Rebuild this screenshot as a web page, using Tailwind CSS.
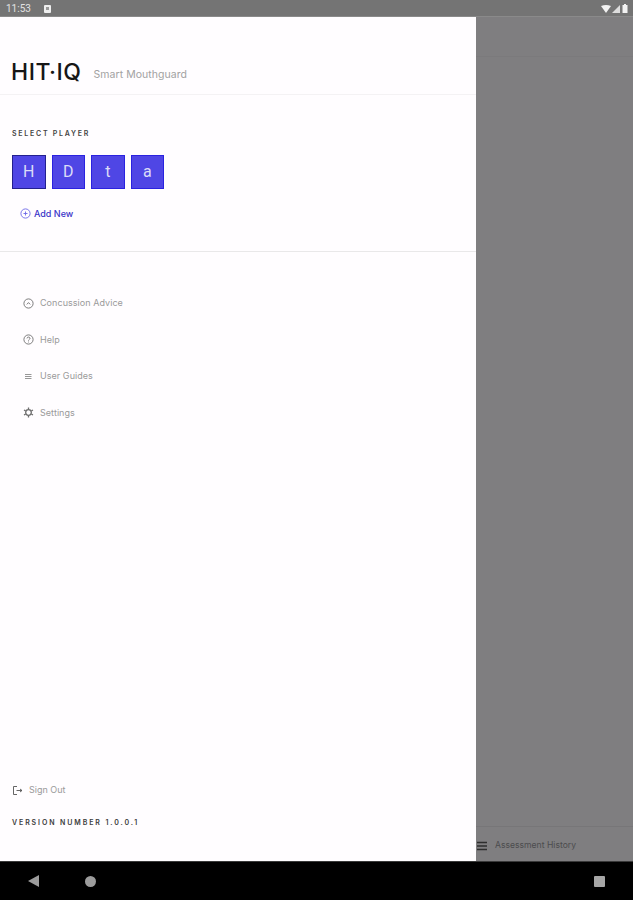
<!DOCTYPE html>
<html lang="en">

<head>
  <meta charset="UTF-8">
  <meta name="viewport" content="width=device-width, initial-scale=1.0">
  <title>HIT-IQ</title>
  <script src="https://cdn.jsdelivr.net/npm/@tailwindcss/browser@4"></script>
</head>

<body class="w-[633px] h-[900px] overflow-hidden flex flex-col bg-black font-['Inter',sans-serif]">
  <!-- Status bar -->
  <div class="h-[17px] shrink-0 bg-[#747474] flex items-center justify-between pl-[6px] pr-[5px] pt-[1px] border-b border-[#8a8a8a]">
    <div class="flex items-center gap-[13px]">
      <span class="text-[10px] leading-none text-[#e2e2e2] font-['Roboto',sans-serif]">11:53</span>
      <div class="w-[7px] h-[8px] bg-[#eeeeee] rounded-[1px] flex items-center justify-center">
        <div class="w-[3px] h-[3px] bg-[#999999]"></div>
      </div>
    </div>
    <div class="flex items-center gap-[1px]">
      <svg width="10" height="8" viewBox="0 0 10 8"><path d="M0 1 Q5 -1 10 1 L5 8Z" fill="#f2f2f2"/></svg>
      <svg width="8" height="8" viewBox="0 0 8 8"><path d="M0 8 L8 0 V8Z" fill="#dddddd"/></svg>
      <svg width="6" height="9" viewBox="0 0 6 9" class="ml-[1px]"><path d="M2 0H4V1H5.5V9H.5V1H2Z" fill="#f2f2f2"/></svg>
    </div>
  </div>

  <div class="flex flex-1 min-h-0">
    <!-- Drawer -->
    <aside class="w-[476px] shrink-0 bg-[#fffdff] flex flex-col">
      <div class="h-[78px] shrink-0 border-b border-[#f4f2f4] flex items-end pl-[11px] pb-[9px] gap-[12px]">
        <span class="text-[23px] leading-[26px] font-medium tracking-[0.5px] text-[#161616] font-['Inter',sans-serif]">HIT·IQ</span>
        <span class="text-[10.5px] leading-[21px] tracking-[0.05px] text-[#a2a2a2]">Smart Mouthguard</span>
      </div>

      <!-- Player picker -->
      <div class="h-[157px] shrink-0 border-b border-[#e9e8e9] pt-[34px] pl-[12px]">
        <p class="text-[7px] leading-[10px] font-semibold tracking-[1.75px] text-[#444444]">SELECT PLAYER</p>
        <div class="flex gap-[6px] mt-[16px]">
          <div class="w-[33.5px] h-[34px] bg-[#4f46e5] border border-[#23208f] flex items-center justify-center text-[16px] text-[#dcdcf8] font-['Roboto',sans-serif]">H</div>
          <div class="w-[33.5px] h-[34px] bg-[#4f46e5] border border-[#2a22e0] flex items-center justify-center text-[16px] text-[#dcdcf8] font-['Roboto',sans-serif]">D</div>
          <div class="w-[33.5px] h-[34px] bg-[#4f46e5] border border-[#2a22e0] flex items-center justify-center text-[16px] text-[#dcdcf8] font-['Roboto',sans-serif]">t</div>
          <div class="w-[33.5px] h-[34px] bg-[#4f46e5] border border-[#2a22e0] flex items-center justify-center text-[16px] text-[#dcdcf8] font-['Roboto',sans-serif]">a</div>
        </div>
        <div class="flex items-center gap-[3px] mt-[18px] ml-[8px]">
          <svg width="11" height="11" viewBox="0 0 11 11" fill="none" stroke="#6b66e8" stroke-width="0.9" class="-mt-[2px]"><circle cx="5.5" cy="5.5" r="4.6"/><path d="M3.5 5.5H7.5M5.5 3.5V7.5"/></svg>
          <span class="text-[9px] leading-[14px] font-medium text-[#3a34c8]">Add New</span>
        </div>
      </div>

      <!-- Menu -->
      <nav class="flex flex-col pt-[42px] pl-[23px] gap-[18.5px] text-[#9a9a9a]">
        <div class="h-[18px] flex items-center gap-[6px]">
          <svg width="11" height="11" viewBox="0 0 11 11" fill="none" stroke="#6e6e6e" stroke-width="0.9"><circle cx="5.5" cy="5.5" r="4.6"/><path d="M3.8 6.4L5.5 4.6L7.2 6.4"/></svg>
          <span class="text-[9px] tracking-[0.05px]">Concussion Advice</span>
        </div>
        <div class="h-[18px] flex items-center gap-[6px]">
          <svg width="11" height="11" viewBox="0 0 11 11" fill="none" stroke="#6e6e6e" stroke-width="0.9"><circle cx="5.5" cy="5.5" r="4.6"/><path d="M4 4.4C4 2.6 7 2.6 7 4.4C7 5.4 5.5 5.5 5.5 6.6M5.5 7.6V8.4"/></svg>
          <span class="text-[9px] tracking-[0.05px]">Help</span>
        </div>
        <div class="h-[18px] flex items-center gap-[6px]">
          <svg width="11" height="11" viewBox="0 0 11 11" fill="none" stroke="#8c8c8c" stroke-width="0.9"><path d="M2 3.5H8.5M2 5.5H8.5M2 7.5H8.5"/></svg>
          <span class="text-[9px] tracking-[0.05px]">User Guides</span>
        </div>
        <div class="h-[18px] flex items-center gap-[6px]">
          <svg width="11" height="11" viewBox="0 0 11 11" fill="none" stroke="#6e6e6e" stroke-width="1.3"><circle cx="5.5" cy="5.5" r="2.8"/><path d="M5.5 .5V2.2M5.5 8.8V10.5M1 3L2.6 3.9M8.4 7.1L10 8M1 8L2.6 7.1M8.4 3.9L10 3"/></svg>
          <span class="text-[9px] tracking-[0.05px]">Settings</span>
        </div>
      </nav>

      <!-- Footer -->
      <div class="mt-auto pl-[12px] pb-[33px]">
        <div class="flex items-center gap-[6px]">
          <svg width="11" height="11" viewBox="0 0 11 11" fill="none" stroke="#555555" stroke-width="0.9"><path d="M5 1.5H1.5V9.5H5M4.5 5.5H10M8 4L10 5.5L8 7"/></svg>
          <span class="text-[9px] leading-[14px] text-[#9a9a9a]">Sign Out</span>
        </div>
        <p class="mt-[21px] text-[7px] leading-[10px] font-semibold tracking-[1.9px] text-[#3c3c3c]">VERSION NUMBER 1.0.0.1</p>
      </div>
    </aside>

    <!-- Dimmed page behind the drawer -->
    <main class="flex-1 bg-[#7f7e80] flex flex-col justify-between">
      <div class="h-[40px] border-b border-[#7b7a7c]"></div>
      <div class="h-[35px] border-t border-[#777678] flex items-center pt-[3px] gap-[8px] pl-[1px]">
        <svg width="10" height="10" viewBox="0 0 10 10" stroke="#2e2e2e" stroke-width="1.3"><path d="M0 1.5H10M0 5H10M0 8.5H10"/></svg>
        <span class="text-[8.6px] text-[#4c4c4e]">Assessment History</span>
      </div>
    </main>
  </div>

  <!-- Android nav bar -->
  <div class="h-[39px] shrink-0 bg-black relative border-t border-[#3a3a3a]">
    <svg width="11" height="12" viewBox="0 0 11 12" class="absolute left-[28px] top-[13px]"><path d="M11 0V12L0 6Z" fill="#9c9c9c"/></svg>
    <div class="absolute left-[85px] top-[14px] w-[11px] h-[11px] rounded-full bg-[#9c9c9c]"></div>
    <div class="absolute left-[594px] top-[14px] w-[11px] h-[11px] rounded-[1px] bg-[#a6a6a6]"></div>
  </div>
</body>
</html>
